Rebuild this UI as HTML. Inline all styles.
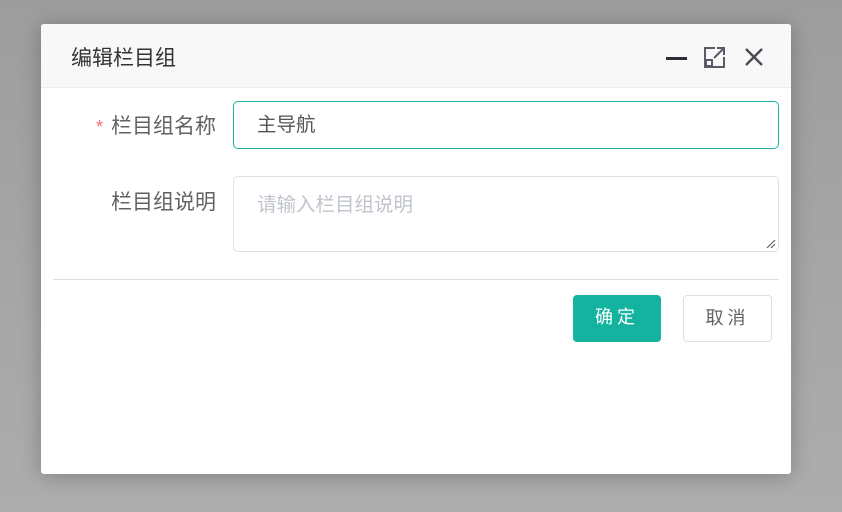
<!DOCTYPE html>
<html><head><meta charset="utf-8"><style>
*{box-sizing:border-box;margin:0;padding:0}
body{width:842px;height:512px;overflow:hidden;background:linear-gradient(#9d9d9d,#adadad);font-family:"Liberation Sans","Noto Sans CJK SC",sans-serif;position:relative}
.dlg{position:absolute;left:41px;top:24px;width:750px;height:450px;background:#fff;border-radius:3px;box-shadow:0 2px 20px rgba(0,0,0,.25)}
.hd{height:64px;background:#f8f8f8;border-bottom:1px solid #eee;border-radius:3px 3px 0 0;position:relative}
.hd .t{position:absolute;left:30px;top:18px;font-size:21px;color:#333}
.lbl{position:absolute;font-size:21px;color:#606266;text-align:right;width:175px;left:0}
.lbl b{color:#f56c6c;font-weight:normal;font-size:18px;margin-right:8px}
.inp{position:absolute;left:192px;width:546px;border:1px solid #dcdfe6;border-radius:5px;font-size:19.5px;padding:0 23px}
.btn{position:absolute;top:271px;height:47px;border-radius:4px;font-size:18px;text-align:center;line-height:45px;letter-spacing:4px}
</style></head><body>
<div class="dlg">
<div class="hd"><div class="t">编辑栏目组</div>
<svg style="position:absolute;left:624px;top:20px" width="100" height="26" viewBox="0 0 100 26">
<rect x="1" y="13" width="21" height="3" fill="#2d2d38"/>
<g fill="none" stroke="#5a5a66" stroke-width="2"><path d="M50 4H40V23H59V13"/><rect x="41" y="16" width="6" height="6"/><path d="M49 14l9-9M52 4h7v7"/>
<path d="M81 5l16 16M97 5l-16 16" stroke="#4a4a55" stroke-width="2.4"/></g></svg>
</div>
<div class="lbl" style="top:86px"><b>*</b>栏目组名称</div>
<div class="inp" style="top:77px;height:48px;border-color:#14b3a0;line-height:46px;color:#555">主导航</div>
<div class="lbl" style="top:162px">栏目组说明</div>
<div class="inp" style="top:152px;height:76px;padding-top:11px;color:#c0c4cc">请输入栏目组说明
<svg style="position:absolute;right:2px;bottom:2px" width="10" height="10"><path d="M1 9L9 1M5 9L9 5" stroke="#555" stroke-width="1"/></svg></div>
<div style="position:absolute;left:12px;top:255px;width:726px;border-top:1px solid #ddd"></div>
<div class="btn" style="left:532px;width:88px;background:#14b3a0;color:#fff">确定</div>
<div class="btn" style="left:642px;width:89px;border:1px solid #dcdfe6;color:#606266">取消</div>
</div>
</body></html>
